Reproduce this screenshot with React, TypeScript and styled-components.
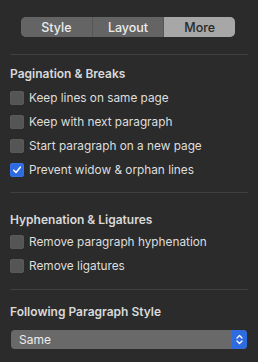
import React from 'react';
import styled, { createGlobalStyle } from 'styled-components';

const Global = createGlobalStyle`
  html, body {
    margin: 0;
    padding: 0;
    background: #2b2b2b;
  }
  * {
    box-sizing: border-box;
  }
`;

const Panel = styled.div`
  width: 258px;
  height: 362px;
  background: #2b2b2b;
  padding: 17px 10px 0;
  font-family: Inter, "Noto Sans", sans-serif;
  color: #dcdcdc;
  overflow: hidden;
`;

const Segmented = styled.div`
  display: flex;
  width: 214px;
  height: 20px;
  margin-left: 11px;
  border-radius: 5px;
  overflow: hidden;
  background: #646464;
`;

const Segment = styled.div<{ $active?: boolean }>`
  flex: 1;
  display: flex;
  align-items: center;
  justify-content: center;
  font-size: 12.5px;
  font-weight: 500;
  color: ${p => (p.$active ? '#2a2a2a' : '#ececec')};
  background: ${p => (p.$active ? '#a7a7a7' : '#646464')};
  & + & {
    border-left: 1px solid #575757;
  }
`;

const Divider = styled.div<{ $top?: number }>`
  height: 1px;
  background: #3f3f3f;
  margin-top: ${p => p.$top ?? 0}px;
`;

const Section = styled.div<{ $top: number; $bottom: number }>`
  padding-top: ${p => p.$top}px;
  padding-bottom: ${p => p.$bottom}px;
`;

const Heading = styled.div<{ $after: number }>`
  font-size: 12px;
  line-height: 14px;
  font-weight: 600;
  color: #d9d9d9;
  margin-bottom: ${p => p.$after}px;
`;

const Row = styled.label`
  display: flex;
  align-items: center;
  gap: 5px;
  height: 24px;
  font-size: 11.8px;
  color: #dedede;
`;

const Box = styled.span<{ $checked?: boolean }>`
  width: 14px;
  height: 14px;
  border-radius: 3px;
  flex: none;
  display: flex;
  align-items: center;
  justify-content: center;
  background: ${p => (p.$checked ? '#2f6be0' : '#555555')};
  box-shadow: inset 0 0 0 0.5px ${p => (p.$checked ? '#3f7af0' : '#606060')};
`;

const Select = styled.div`
  display: flex;
  height: 19px;
  margin-left: 1px;
  margin-right: 1px;
  border-radius: 4px;
  overflow: hidden;
  background: #696969;
`;

const SelectValue = styled.div`
  flex: 1;
  display: flex;
  align-items: center;
  padding-left: 8px;
  font-size: 12px;
  color: #ececec;
`;

const SelectArrows = styled.div`
  width: 15px;
  display: flex;
  align-items: center;
  justify-content: center;
  background: #2f6be0;
`;

const Check = () => (
  <svg width="10" height="10" viewBox="0 0 10 10">
    <path d="M1.8 5.2 L4 7.4 L8.3 2.2" fill="none" stroke="#fff" strokeWidth="1.6" strokeLinecap="round" strokeLinejoin="round" />
  </svg>
);

const Arrows = () => (
  <svg width="9" height="13" viewBox="0 0 9 13">
    <path d="M2 5 L4.5 2.5 L7 5 M2 8 L4.5 10.5 L7 8" fill="none" stroke="#fff" strokeWidth="1.3" strokeLinecap="round" strokeLinejoin="round" />
  </svg>
);

const Option: React.FC<{ label: string; checked?: boolean }> = ({ label, checked }) => (
  <Row>
    <Box $checked={checked}>{checked && <Check />}</Box>
    {label}
  </Row>
);

export default function App() {
  return (
    <>
      <Global />
      <Panel>
        <Segmented>
          <Segment>Style</Segment>
          <Segment>Layout</Segment>
          <Segment $active>More</Segment>
        </Segmented>
        <Divider $top={17} />
        <Section $top={12} $bottom={10}>
          <Heading $after={5}>Pagination &amp; Breaks</Heading>
          <Option label="Keep lines on same page" />
          <Option label="Keep with next paragraph" />
          <Option label="Start paragraph on a new page" />
          <Option label="Prevent widow & orphan lines" checked />
        </Section>
        <Divider />
        <Section $top={20} $bottom={11}>
          <Heading $after={3}>Hyphenation &amp; Ligatures</Heading>
          <Option label="Remove paragraph hyphenation" />
          <Option label="Remove ligatures" />
        </Section>
        <Divider />
        <Section $top={15} $bottom={0}>
          <Heading $after={11}>Following Paragraph Style</Heading>
          <Select>
            <SelectValue>Same</SelectValue>
            <SelectArrows>
              <Arrows />
            </SelectArrows>
          </Select>
        </Section>
      </Panel>
    </>
  );
}
